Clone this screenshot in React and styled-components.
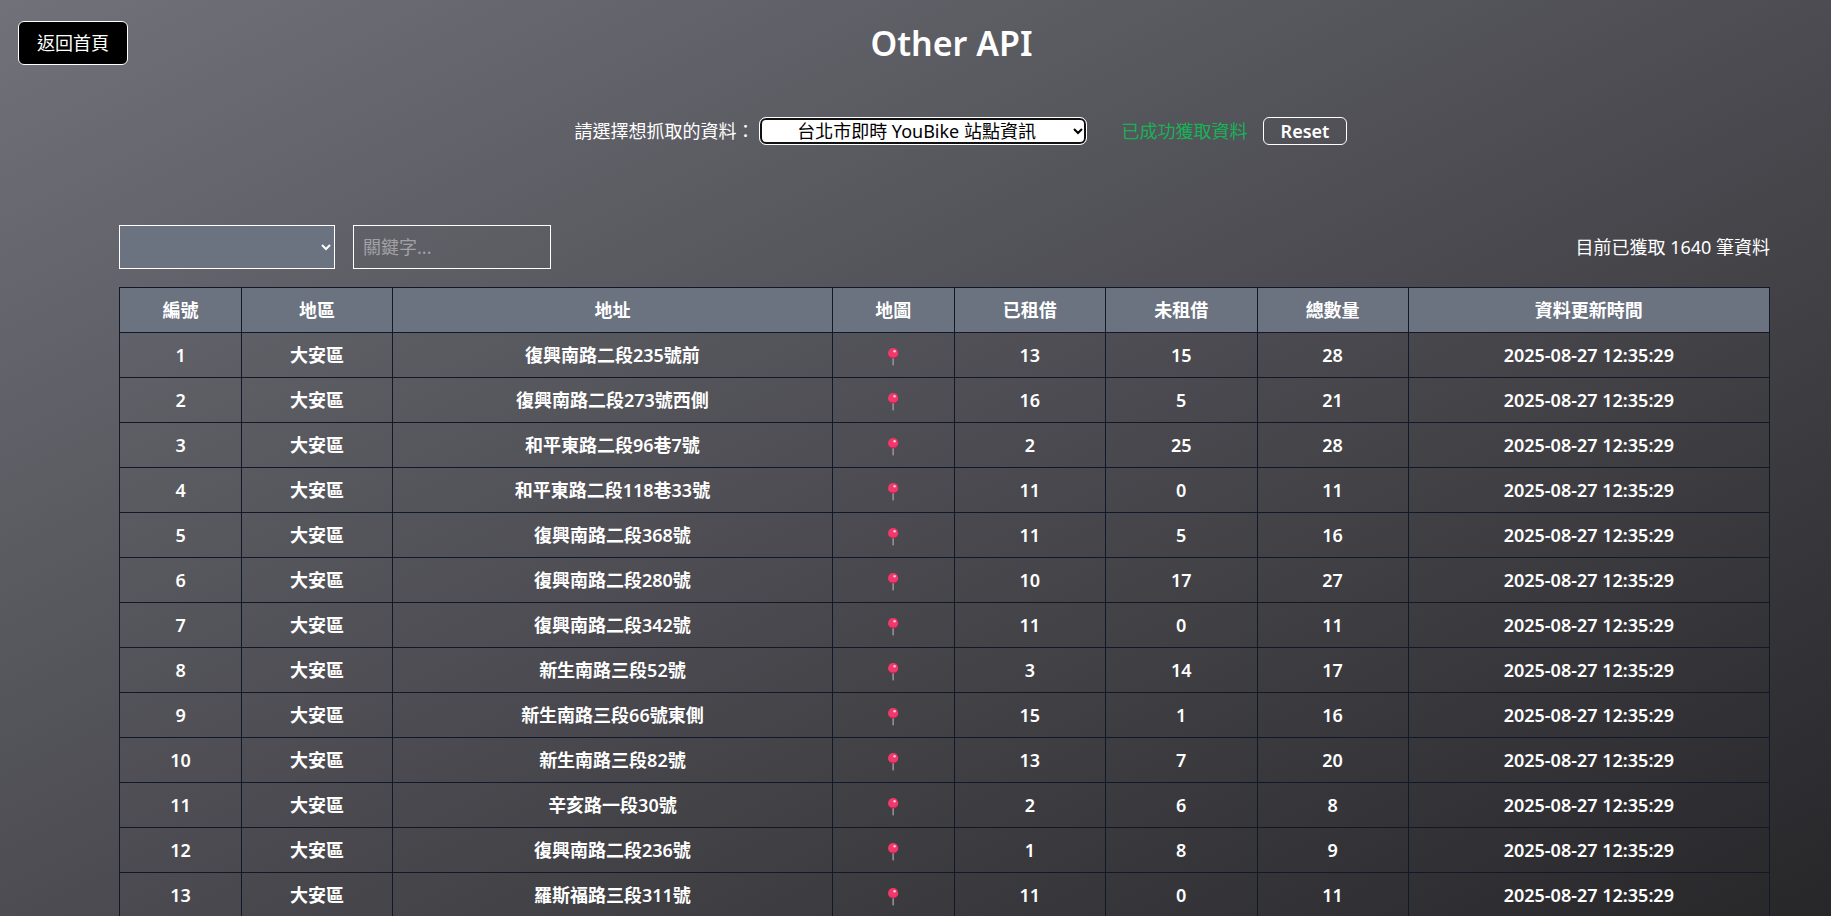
import React from "react";
import styled, { createGlobalStyle } from "styled-components";

const GlobalStyle = createGlobalStyle`
  *, *::before, *::after { box-sizing: border-box; }
  html { height: 100%; overflow: hidden; }
  body {
    height: 100%;
    margin: 0;
    overflow: hidden;
    font-family: "Noto Sans", "Noto Sans CJK TC", sans-serif;
    font-size: 18px;
    line-height: 26px;
    color: #fff;
  }
  #root { height: 100%; }
  button, input, select { font: inherit; color: inherit; }
`;

const Page = styled.div`
  height: 100%;
  overflow: hidden;
  background: linear-gradient(to bottom right, #71717a, #27272a);
`;

const Header = styled.header`
  display: flex;
  align-items: center;
  padding: 21px 56px 0 18px;
`;

const HomeButton = styled.button`
  height: 44px;
  padding: 0 18px;
  border: 1px solid #fff;
  border-radius: 6px;
  background: #000;
`;

const Title = styled.h1`
  flex: 1;
  margin: 0;
  text-align: center;
  font-size: 34px;
  line-height: 44px;
  font-weight: 600;
`;

const SourceBar = styled.section`
  display: flex;
  align-items: center;
  justify-content: center;
  padding: 52px 0 0 91px;
`;

const SourceSelect = styled.select`
  width: 326px;
  height: 26px;
  margin: 1px 36px 1px 5px;
  padding: 0;
  border: none;
  border-radius: 6px;
  outline: 1px solid #fff;
  box-shadow: inset 0 0 0 2px #101010;
  background: #fff;
  color: #000;
  text-align: center;
`;

const Status = styled.output`
  color: #16b356;
`;

const ResetButton = styled.button`
  height: 28px;
  margin-left: 15px;
  padding: 0 17px;
  border: 1px solid #fff;
  border-radius: 6px;
  background: transparent;
  font-weight: 600;
  line-height: 26px;
`;

const Content = styled.main`
  padding: 80px 61px 0 119px;
`;

const FilterBar = styled.div`
  display: flex;
  align-items: center;
  gap: 18px;
  margin-bottom: 18px;
`;

const AreaSelect = styled.select`
  width: 216px;
  height: 44px;
  border: 1px solid #fff;
  border-radius: 0;
  background: #6b7280;
`;

const KeywordInput = styled.input`
  width: 198px;
  height: 44px;
  padding: 0 9px;
  border: 1px solid #fff;
  background: transparent;
  &::placeholder { color: #a1a1a5; }
`;

const Count = styled.p`
  margin: 0 0 0 auto;
`;

const Table = styled.table`
  width: 100%;
  table-layout: fixed;
  border-collapse: collapse;
  text-align: center;
  font-weight: 600;
`;

const Col = styled.col`
  width: ${(p) => p.$share}%;
`;

const HeadCell = styled.th`
  height: 45px;
  padding: 0;
  border: 1px solid #111827;
  background: #6b7280;
  font-weight: 600;
`;

const Cell = styled.td`
  height: 45px;
  padding: 0;
  border: 1px solid #111827;
`;

const MapLink = styled.a`
  display: inline-flex;
  vertical-align: middle;
`;

function Pin() {
  return (
    <svg width="12" height="18" viewBox="0 0 12 18" aria-hidden="true">
      <rect x="5.4" y="9" width="1.5" height="8.4" fill="#96969b" />
      <circle cx="6.1" cy="5.2" r="5.1" fill="#f0386b" />
      <path d="M1.5 7.4a5.1 5.1 0 0 0 9.2 0 6.5 6.5 0 0 1-9.2 0z" fill="#c9235a" />
      <circle cx="7.6" cy="3.3" r="1.3" fill="#ffc4d6" />
    </svg>
  );
}

const shares = [7.4, 9.15, 26.65, 7.4, 9.15, 9.2, 9.15, 21.9];
const heads = ["編號", "地區", "地址", "地圖", "已租借", "未租借", "總數量", "資料更新時間"];
const stations = [
  ["復興南路二段235號前", 13, 15, 28],
  ["復興南路二段273號西側", 16, 5, 21],
  ["和平東路二段96巷7號", 2, 25, 28],
  ["和平東路二段118巷33號", 11, 0, 11],
  ["復興南路二段368號", 11, 5, 16],
  ["復興南路二段280號", 10, 17, 27],
  ["復興南路二段342號", 11, 0, 11],
  ["新生南路三段52號", 3, 14, 17],
  ["新生南路三段66號東側", 15, 1, 16],
  ["新生南路三段82號", 13, 7, 20],
  ["辛亥路一段30號", 2, 6, 8],
  ["復興南路二段236號", 1, 8, 9],
  ["羅斯福路三段311號", 11, 0, 11],
];

export default function App() {
  return (
    <Page>
      <GlobalStyle />
      <Header>
        <HomeButton type="button">返回首頁</HomeButton>
        <Title>Other API</Title>
      </Header>
      <SourceBar>
        <label htmlFor="source">請選擇想抓取的資料：</label>
        <SourceSelect id="source" defaultValue="youbike">
          <option value="youbike">台北市即時 YouBike 站點資訊</option>
        </SourceSelect>
        <Status>已成功獲取資料</Status>
        <ResetButton type="button">Reset</ResetButton>
      </SourceBar>
      <Content>
        <FilterBar>
          <AreaSelect aria-label="地區" defaultValue="">
            <option value=""></option>
            <option value="大安區">大安區</option>
          </AreaSelect>
          <KeywordInput type="text" aria-label="關鍵字" placeholder="關鍵字..." />
          <Count>目前已獲取 1640 筆資料</Count>
        </FilterBar>
        <Table>
          <colgroup>
            {shares.map((s, i) => <Col key={i} $share={s} />)}
          </colgroup>
          <thead>
            <tr>{heads.map((h) => <HeadCell key={h} scope="col">{h}</HeadCell>)}</tr>
          </thead>
          <tbody>
            {stations.map(([address, rented, free, total], i) => (
              <tr key={address}>
                <Cell>{i + 1}</Cell>
                <Cell>大安區</Cell>
                <Cell>{address}</Cell>
                <Cell><MapLink href="#map" aria-label="地圖"><Pin /></MapLink></Cell>
                <Cell>{rented}</Cell>
                <Cell>{free}</Cell>
                <Cell>{total}</Cell>
                <Cell>2025-08-27 12:35:29</Cell>
              </tr>
            ))}
          </tbody>
        </Table>
      </Content>
    </Page>
  );
}
